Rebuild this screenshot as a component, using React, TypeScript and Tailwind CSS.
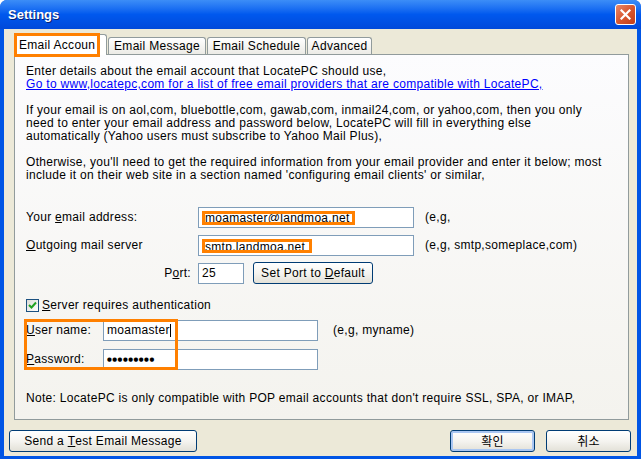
import React from "react";

const btn =
  "flex items-center justify-center h-[22px] rounded-[3px] border border-[#003C74] bg-gradient-to-b from-white via-[#F5F4F0] to-[#E3E1D8] text-[12px] text-black";

const field = "flex items-center h-[21px] border border-[#7F9DB9] bg-white px-[3px] text-[12px] text-black";

function Tab({ label, w }: { label: string; w: string }) {
  return (
    <div
      className={`${w} h-[17px] flex items-center justify-center rounded-t-[3px] border border-b-0 border-[#919B9C] bg-gradient-to-b from-white to-[#ECEBE6] text-[12px]`}
    >
      {label}
    </div>
  );
}

export default function App() {
  return (
    <div className="w-[641px] h-[459px] flex flex-col bg-[#0055E5] rounded-t-[7px] overflow-hidden font-['Liberation_Sans',sans-serif] text-black">
      {/* title bar */}
      <div className="h-[29px] flex items-center justify-between pl-[8px] pr-[5px] bg-gradient-to-b from-[#3C8DF7] via-[#0058EE] to-[#0049DA]">
        <span className="text-white font-bold text-[13px] [text-shadow:1px_1px_0_#0A1F6E]">Settings</span>
        <div className="w-[21px] h-[21px] rounded-[3px] border border-white bg-gradient-to-br from-[#E8886A] via-[#D9572F] to-[#C23E18] flex items-center justify-center">
          <svg width="11" height="11" viewBox="0 0 11 11">
            <path d="M1.5 1.5 L9.5 9.5 M9.5 1.5 L1.5 9.5" stroke="white" strokeWidth="2.2" strokeLinecap="square" />
          </svg>
        </div>
      </div>

      {/* body */}
      <div className="flex-1 mx-[4px] mb-[3px] bg-[#ECE9D8] flex flex-col pt-[5px] tracking-[0.3px]">
        {/* tabs */}
        <div className="flex items-end gap-[1px] pl-[10px] h-[20px]">
          <div className="relative z-10 w-[93px] h-[21px] -mb-px rounded-t-[3px] border border-b-0 border-[#919B9C] bg-white flex items-center pl-[4px] text-[12px]">
            Email Accoun
            <div className="absolute -left-px -top-[2px] w-[86px] h-[24px] border-[3px] border-[#FF8000]" />
          </div>
          <Tab label="Email Message" w="w-[98px]" />
          <Tab label="Email Schedule" w="w-[99px]" />
          <Tab label="Advanced" w="w-[65px]" />
        </div>

        {/* panel */}
        <div className="ml-[10px] w-[615px] h-[366px] border border-[#919B9C] bg-gradient-to-b from-[#FCFCFE] to-[#F4F3EE] pl-[11px] pt-[10px] text-[12px] leading-[13px]">
          <p>Enter details about the email account that LocatePC should use,</p>
          <p className="text-[#0000FF] underline">
            Go to www,locatepc,com for a list of free email providers that are compatible with LocatePC,
          </p>
          <p className="h-[13px]" />
          <p>If your email is on aol,com, bluebottle,com, gawab,com, inmail24,com, or yahoo,com, then you only</p>
          <p>need to enter your email address and password below, LocatePC will fill in everything else</p>
          <p>automatically (Yahoo users must subscribe to Yahoo Mail Plus),</p>
          <p className="h-[13px]" />
          <p>Otherwise, you'll need to get the required information from your email provider and enter it below; most</p>
          <p>include it on their web site in a section named 'configuring email clients' or similar,</p>

          {/* email */}
          <div className="flex items-center mt-[25px]">
            <span className="w-[172px]">
              Your <u>e</u>mail address:
            </span>
            <div className={`${field} w-[216px]`}>
              <span className="inline-block h-[14px] border-[3px] border-[#FF8000] bg-white overflow-hidden leading-[9px] pr-[2px]">
                moamaster@landmoa,net
              </span>
            </div>
            <span className="ml-[11px]">(e,g,</span>
          </div>

          {/* outgoing */}
          <div className="flex items-center mt-[7px]">
            <span className="w-[172px]">
              <u>O</u>utgoing mail server
            </span>
            <div className={`${field} w-[216px]`}>
              <span className="inline-block h-[14px] border-[3px] border-[#FF8000] bg-white overflow-hidden leading-[10px] pr-[4px]">
                smtp,landmoa,net
              </span>
            </div>
            <span className="ml-[11px]">(e,g, smtp,someplace,com)</span>
          </div>

          {/* port */}
          <div className="flex items-center mt-[6px]">
            <span className="w-[172px] text-right pr-[7px]">
              P<u>o</u>rt:
            </span>
            <div className={`${field} w-[46px]`}>25</div>
            <button className={`${btn} ml-[9px] w-[120px] h-[21px]`}>
              Set Port to&nbsp;<u>D</u>efault
            </button>
          </div>

          {/* checkbox */}
          <div className="flex items-center mt-[15px] h-[13px]">
            <div className="w-[13px] h-[13px] border border-[#1C5180] bg-gradient-to-br from-[#DCDCD7] to-white flex items-center justify-center">
              <svg width="9" height="9" viewBox="0 0 9 9">
                <path d="M1 4 L3.5 6.5 L8 1.5" stroke="#21A121" strokeWidth="2" fill="none" />
              </svg>
            </div>
            <span className="ml-[3px]">
              <u>S</u>erver requires authentication
            </span>
          </div>

          {/* user / password */}
          <div className="relative mt-[8px]">
            <div className="flex items-center">
              <span className="w-[77px]">
                <u>U</u>ser name:
              </span>
              <div className={`${field} w-[215px]`}>
                moamaster<span className="inline-block w-px h-[13px] bg-black" />
              </div>
              <span className="ml-[15px]">(e,g, myname)</span>
            </div>
            <div className="flex items-center mt-[8px]">
              <span className="w-[77px]">
                <u>P</u>assword:
              </span>
              <div className={`${field} w-[215px]`}>
                <span className="font-['DejaVu_Sans',sans-serif] text-[5.5px] tracking-[0.5px]">●●●●●●●●●</span>
              </div>
            </div>
            <div className="absolute -left-[2px] -top-[1px] w-[154px] h-[51px] border-[3px] border-[#FF8000]" />
          </div>

          <p className="mt-[22px]">
            Note: LocatePC is only compatible with POP email accounts that don't require SSL, SPA, or IMAP,
          </p>
        </div>

        {/* bottom buttons */}
        <div className="flex items-center mt-[10px] pl-[5px] pr-[6px]">
          <button className={`${btn} w-[188px]`}>
            Send a&nbsp;<u>T</u>est Email Message
          </button>
          <div className="flex-1" />
          <button className={`${btn} w-[85px] shadow-[inset_0_0_0_2px_#A9C6F2] font-['Noto_Sans_CJK_KR',sans-serif]`}>
            확인
          </button>
          <button className={`${btn} w-[85px] ml-[11px] font-['Noto_Sans_CJK_KR',sans-serif]`}>취소</button>
        </div>
      </div>
    </div>
  );
}
